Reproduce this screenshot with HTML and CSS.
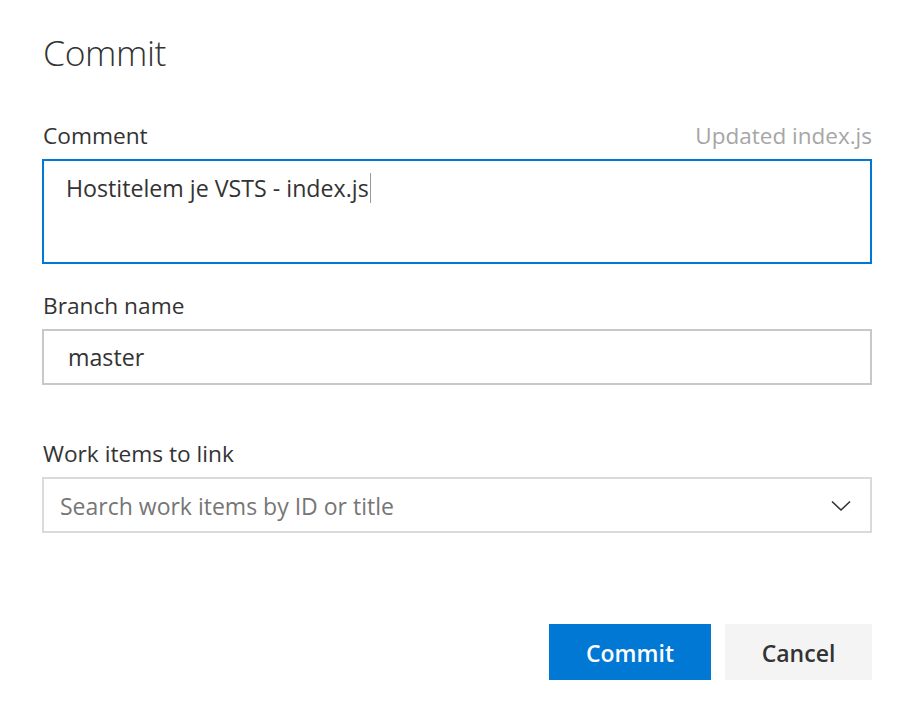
FILE: index.html
```html
<!DOCTYPE html>
<html>
<head>
<meta charset="utf-8">
<link rel="stylesheet" href="styles.css">
</head>
<body>
<div class="dialog">
  <h1 class="title">Commit</h1>
  <div class="field field-comment">
    <div class="label-row">
      <span class="label">Comment</span>
      <span class="hint">Updated index.js</span>
    </div>
    <div class="textarea"><span class="text">Hostitelem je VSTS - index.js</span><span class="caret"></span></div>
  </div>
  <div class="field field-branch">
    <div class="label-row"><span class="label">Branch name</span></div>
    <div class="input"><span class="text">master</span></div>
  </div>
  <div class="field field-work">
    <div class="label-row"><span class="label">Work items to link</span></div>
    <div class="combo">
      <span class="placeholder">Search work items by ID or title</span>
      <svg class="chevron" width="20" height="12" viewBox="0 0 20 12"><path d="M1 1.5 L10 10 L19 1.5" fill="none" stroke="#333" stroke-width="1.6"/></svg>
    </div>
  </div>
  <div class="actions">
    <button class="btn btn-primary">Commit</button>
    <button class="btn btn-secondary">Cancel</button>
  </div>
</div>
</body>
</html>
```
FILE: styles.css
```css
html, body {
  margin: 0;
  padding: 0;
  background: #fff;
}
body {
  font-family: "Open Sans", "Noto Sans", sans-serif;
  color: #333;
}
.dialog {
  width: 830px;
  padding: 28px 0 0 42px;
}
.title {
  margin: 0 0 0 1px;
  font-size: 35.5px;
  font-weight: 300;
  line-height: 48px;
  color: #333;
  letter-spacing: -0.4px;
}
.field-comment { margin-top: 41px; }
.field-branch { margin-top: 23px; }
.field-work { margin-top: 50px; }
.label-row {
  display: flex;
  justify-content: space-between;
  align-items: baseline;
  padding-left: 1px;
  height: 38px;
  line-height: 38px;
}
.label {
  font-size: 22.7px;
  color: #333;
}
.hint {
  font-size: 22.5px;
  color: #a6a6a6;
}
.textarea {
  margin-top: 4px;
  border: 2px solid #0078d4;
  padding: 9px 0 0 22px;
  box-sizing: border-box;
  height: 105px;
  display: flex;
  align-items: flex-start;
}
.text {
  font-size: 23.2px;
  line-height: 36px;
  color: #333;
}
.caret {
  display: inline-block;
  width: 1px;
  height: 30px;
  background: #999;
  margin-top: 3px;
  margin-left: 1px;
}
.input {
  margin-top: 4px;
  height: 56px;
  box-sizing: border-box;
  border: 2px solid #c8c8c8;
  padding-left: 24px;
  display: flex;
  align-items: center;
}
.combo {
  margin-top: 4px;
  height: 56px;
  box-sizing: border-box;
  border: 2px solid #dadada;
  padding: 0 19px 0 16px;
  display: flex;
  align-items: center;
  justify-content: space-between;
}
.placeholder {
  font-size: 23px;
  color: #767676;
  margin-top: 2px;
}
.chevron { margin-top: 2px; }
.actions {
  margin-top: 91px;
  display: flex;
  justify-content: flex-end;
  gap: 14px;
}
.btn {
  height: 56px;
  border: none;
  font-family: "Open Sans", "Noto Sans", sans-serif;
  font-size: 23px;
  font-weight: 600;
  padding: 2px 0 0;
  cursor: pointer;
}
.btn-primary {
  width: 162px;
  background: #0078d4;
  color: #fff;
}
.btn-secondary {
  width: 147px;
  background: #f4f4f4;
  color: #333;
}
```
